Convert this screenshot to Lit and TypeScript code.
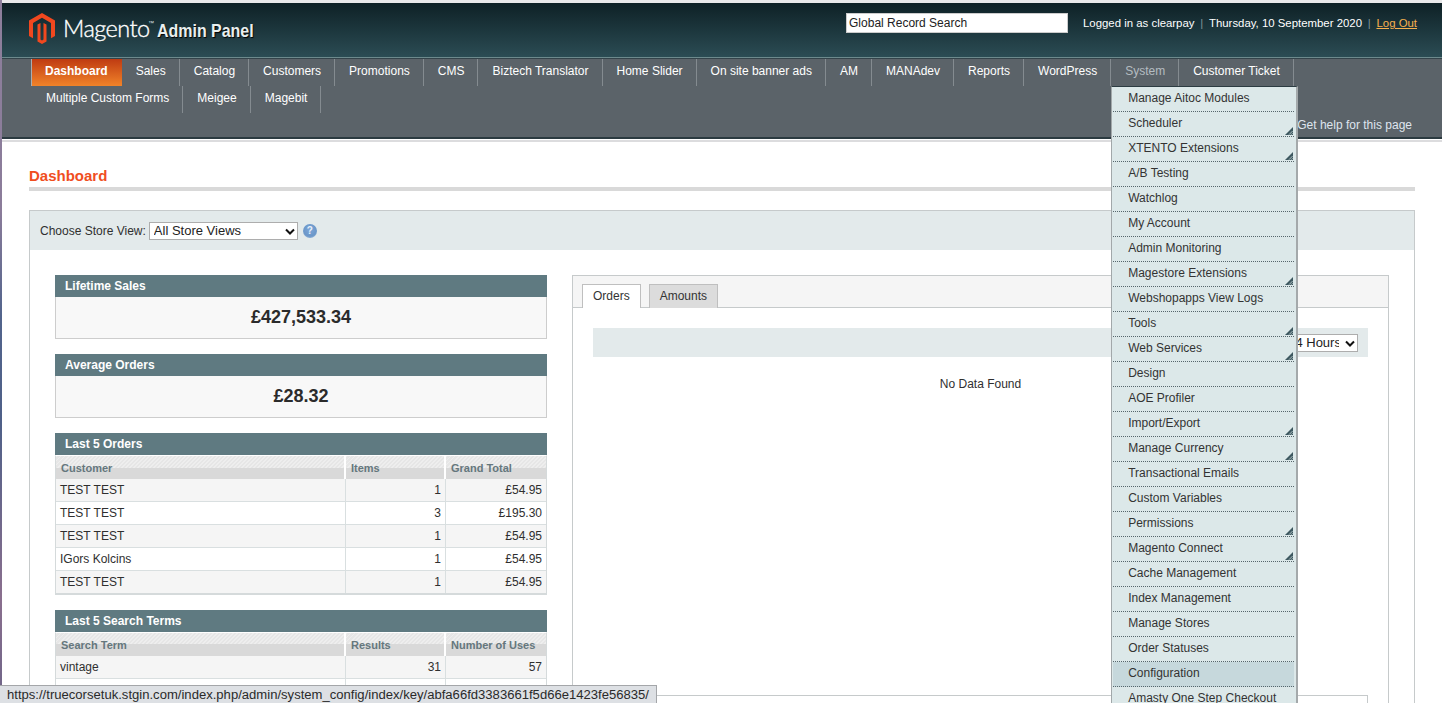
import { LitElement, html, css, nothing } from "lit";
import { customElement } from "lit/decorators.js";

const NAV = ["Dashboard","Sales","Catalog","Customers","Promotions","CMS","Biztech Translator","Home Slider","On site banner ads","AM","MANAdev","Reports","WordPress","System","Customer Ticket","Multiple Custom Forms","Meigee","Magebit"];
const MENU: [string, boolean][] = [
  ["Manage Aitoc Modules",false],["Scheduler",true],["XTENTO Extensions",true],["A/B Testing",false],["Watchlog",false],["My Account",false],["Admin Monitoring",false],["Magestore Extensions",true],["Webshopapps View Logs",false],["Tools",true],["Web Services",true],["Design",false],["AOE Profiler",false],["Import/Export",true],["Manage Currency",true],["Transactional Emails",false],["Custom Variables",false],["Permissions",true],["Magento Connect",true],["Cache Management",false],["Index Management",false],["Manage Stores",false],["Order Statuses",false],["Configuration",false],["Amasty One Step Checkout",false]
];
const ORDERS = [["TEST TEST","1","£54.95"],["TEST TEST","3","£195.30"],["TEST TEST","1","£54.95"],["IGors Kolcins","1","£54.95"],["TEST TEST","1","£54.95"]];
const TERMS = [["vintage","31","57"],["Sharp","5","12"]];

@customElement("app-root")
export class AppRoot extends LitElement {
  static styles = css`
    :host { display:flex; position:relative; width:1442px; height:703px; overflow:hidden; background:#fff; font:12px "Liberation Sans",Arial,sans-serif; color:#2f2f2f; }
    * { box-sizing:border-box; }
    .strip { width:2px; flex:none; background:linear-gradient(#8d7f9c 0,#8b7c9a 30%,#52648c 45%,#4f6088 60%,#8a6f8e 85%,#6d6488 100%); }
    .page { flex:1; min-width:0; display:flex; flex-direction:column; }
    .topline { height:3px; flex:none; background:#e9e9ea; }
    .header { height:55px; flex:none; display:flex; justify-content:space-between; background:linear-gradient(#0e2126,#2b4c54); border-bottom:1px solid #6c8a8d; padding:0 25px 0 27px; }
    .logo { display:flex; align-items:flex-start; padding-top:10px; color:#fff; }
    .logo svg { width:26px; height:31px; flex:none; }
    .mag { font:300 23.5px/31px Lato,"Liberation Sans",sans-serif; margin-left:8px; letter-spacing:-.55px; width:85px; -webkit-text-stroke:.35px #fff; white-space:nowrap; }
    .tm { font-size:6px; line-height:16px; color:#dfe5e6; width:9px; padding-top:2px; }
    .ap { font:700 19px/31px "Liberation Sans",sans-serif; transform:scaleX(.84); transform-origin:left; text-shadow:1px 1px 1px #000; padding-top:2px; white-space:nowrap; width:97px; color:#e9efef; }
    .hright { display:flex; align-items:flex-start; padding-top:10px; color:#fff; }
    .search { width:222px; height:20px; background:#fff; border:1px solid #ccc; padding:0 2px; color:#222; font:12px "Liberation Sans",sans-serif; line-height:18px; margin-right:15px; }
    .hinfo { line-height:20px; display:flex; font-size:11.4px; }
    .pipe { color:#7f9398; margin:0 5.75px; }
    .logout { color:#f6b14e; text-decoration:underline; }
    .nav { height:81px; flex:none; background:#5b6369; border-top:1px solid #33434a; border-bottom:2px solid #2b3a40; display:flex; flex-direction:column; }
    .menu { list-style:none; margin:0; padding:0 118px 0 30px; display:flex; flex-wrap:wrap; }
    .menu > li { position:relative; height:27px; line-height:24px; padding:0 13px 0 14px; color:#fff; border-right:1px solid #848b90; white-space:nowrap; }
    .menu > li.active { font-weight:700; background:linear-gradient(#bf3b12,#f18329); border-right:0; padding:0 14px 0 13px; box-shadow:-1px 0 0 #a9adb0; }
    .menu > li.sys { color:#b4bcc1; }
    .drop { position:absolute; left:0; top:100%; width:187px; margin:0; padding:0 2px 0 1px; list-style:none; background:#dce8e9; border-top:1px solid #2c3c42; border-left:1px solid #a2a8aa; border-right:2px solid #a4a9ab; z-index:5; line-height:23px; }
    .drop li { position:relative; height:25px; line-height:23px; padding-left:15px; color:#333; border-bottom:1px dotted #56666c; }
    .drop li.hov { background:#c6d8dc; }
    .drop svg { position:absolute; right:1px; bottom:1px; width:8px; height:8px; }
    .help { margin-top:auto; padding:0 30px 4px 0; text-align:right; color:#dfe5ee; line-height:16px; }
    .under { height:3px; flex:none; background:linear-gradient(#fff 0 1px,#dcdcde 1px); }
    .content { flex:1; min-height:0; padding:0 27px; }
    .title { margin:0; padding-top:25px; height:49px; font:700 15px/18px "Liberation Sans",sans-serif; color:#f04e1e; border-bottom:4px solid #d9d9d9; }
    .panel { margin-top:19px; border:1px solid #c6cacb; border-bottom:0; height:600px; }
    .switcher { height:39px; background:#e3eaeb; display:flex; align-items:center; padding:0 10px; gap:3px; }
    .sel { position:relative; display:inline-flex; }
    select { appearance:none; background:#fff; border:1px solid #adadad; font:13px "Liberation Sans",sans-serif; color:#222; padding:0 18px 0 4px; height:18px; border-radius:0; line-height:16px; margin:0; }
    .sel svg { position:absolute; right:3px; top:6px; width:10px; height:7px; pointer-events:none; }
    .hint { width:14px; height:14px; border-radius:50%; margin-left:2px; background:radial-gradient(circle at 50% 40%,#7ea7d8,#6b97c9 60%,#b5cde6); color:#e8f0fa; font:700 10px/14px "Liberation Sans",sans-serif; text-align:center; }
    .cols { display:flex; gap:25px; padding:25px; }
    .left { width:492px; flex:none; display:flex; flex-direction:column; gap:15px; }
    .right { width:817px; flex:none; border:1px solid #c6cacb; height:640px; }
    .bhead { height:22px; background:#5f7a81; color:#fff; font-weight:700; line-height:22px; padding-left:10px; }
    .bval { height:42px; background:#f8f8f8; border:1px solid #cdcdcd; border-top:0; text-align:center; font:700 18px/40px "Liberation Sans",sans-serif; color:#2b2b2b; }
    table { width:492px; table-layout:fixed; border-collapse:separate; border-spacing:0; border-left:1px solid #d5dadb; border-right:1px solid #d5dadb; border-bottom:2px solid #d5dadb; border-top:1px solid #fff; }
    th { height:23px; padding:1px 0 0 5px; text-align:left; font:700 11px/22px "Liberation Sans",sans-serif; color:#65777d; background:linear-gradient(#0000 0 50%,#d9d9d9 50%),repeating-linear-gradient(135deg,#eeeeee 0 1.41px,#e6e6e6 1.41px 2.83px); border-right:2px solid #fff; }
    td { height:23px; padding:0 4px; line-height:22px; vertical-align:top; border-bottom:1px solid #d9dfe0; border-right:1px solid #d9dfe0; background:#f5f5f5; }
    tr.even td { background:#fff; }
    tr:last-child td { border-bottom:0; height:22px; }
    td:last-child, th:last-child { border-right:0; }
    td.n { text-align:right; padding-right:4px; }
    .tabs { height:32px; background:#f5f5f5; border-bottom:1px solid #c6cacb; padding:8px 0 0 9px; display:flex; gap:8px; }
    .tab { height:24px; padding:0 10px; line-height:22px; background:#dcdcdc; border:1px solid #bfbfbf; border-bottom:0; color:#333; }
    .tab.on { background:#fff; height:24px; margin-bottom:-1px; }
    .tbody { padding:20px; }
    .range { height:29px; background:#e3eaeb; display:flex; justify-content:flex-end; align-items:center; padding-right:10px; }
    .nodata { height:338px; padding-top:20px; text-align:center; line-height:14px; }
    .chartbox { border:1px solid #c6cacb; height:200px; background:#fff; }
    .status { position:absolute; left:0; bottom:0; height:18px; width:657px; background:#dde0e4; border-top:1px solid #a4a6a9; border-right:1px solid #a4a6a9; padding-left:7px; font:13.08px/17px "Liberation Sans",sans-serif; color:#2a2a2a; white-space:nowrap; z-index:6; }
  `;

  private chevron() {
    return html`<svg viewBox="0 0 10 7"><path d="M1 1.5 5 5.5 9 1.5" fill="none" stroke="#111" stroke-width="2"/></svg>`;
  }

  private grid(heads: string[], rows: string[][]) {
    return html`<table>
      <colgroup><col style="width:290px"/><col style="width:100px"/><col/></colgroup>
      <thead><tr>${heads.map((h) => html`<th>${h}</th>`)}</tr></thead>
      <tbody>${rows.map((r, i) => html`<tr class=${i % 2 ? "even" : ""}><td>${r[0]}</td><td class="n">${r[1]}</td><td class="n">${r[2]}</td></tr>`)}</tbody>
    </table>`;
  }

  render() {
    return html`
      <div class="strip"></div>
      <div class="page">
        <div class="topline"></div>
        <header class="header">
          <div class="logo">
            <svg viewBox="0 0 26 31"><path fill="#f1481f" d="M13 0 26 7.6V23l-4 2.3V9.9L13 4.7 4 9.9v15.4L0 23V7.6Z"/><path fill="#f1481f" d="M13 31 8.5 28.4V11.6l3-1.7v16.6l1.5.9 1.5-.9V9.9l3 1.7v16.8Z"/></svg>
            <span class="mag">Magento</span><span class="tm">™</span><span class="ap">Admin Panel</span>
          </div>
          <div class="hright">
            <div class="search">Global Record Search</div>
            <div class="hinfo"><span>Logged in as clearpay</span><span class="pipe">|</span><span>Thursday, 10 September 2020</span><span class="pipe">|</span><span class="logout">Log Out</span></div>
          </div>
        </header>
        <nav class="nav">
          <ul class="menu">
            ${NAV.map((n) => html`<li class=${n === "Dashboard" ? "active" : n === "System" ? "sys" : ""}>${n}
              ${n === "System" ? html`<ul class="drop">${MENU.map(([m, a]) => html`<li class=${m === "Configuration" ? "hov" : ""}>${m}${a ? html`<svg viewBox="0 0 9 9"><path d="M9 0V9H0Z" fill="#3d5860"/><path d="M4.5 8.6 8.6 4.5M7 8.6 8.6 7" stroke="#dce8e9" stroke-width=".8"/></svg>` : nothing}</li>`)}</ul>` : nothing}</li>`)}
          </ul>
          <div class="help">Get help for this page</div>
        </nav>
        <div class="under"></div>
        <main class="content">
          <h3 class="title">Dashboard</h3>
          <section class="panel">
            <div class="switcher">
              <span>Choose Store View:</span>
              <span class="sel"><select style="width:149px"><option>All Store Views</option></select>${this.chevron()}</span>
              <span class="hint">?</span>
            </div>
            <div class="cols">
              <div class="left">
                <div><div class="bhead">Lifetime Sales</div><div class="bval">£427,533.34</div></div>
                <div><div class="bhead">Average Orders</div><div class="bval">£28.32</div></div>
                <div><div class="bhead">Last 5 Orders</div>${this.grid(["Customer","Items","Grand Total"], ORDERS)}</div>
                <div><div class="bhead">Last 5 Search Terms</div>${this.grid(["Search Term","Results","Number of Uses"], TERMS)}</div>
              </div>
              <div class="right">
                <div class="tabs"><div class="tab on">Orders</div><div class="tab">Amounts</div></div>
                <div class="tbody">
                  <div class="range"><span class="sel"><select style="width:103px"><option>Last 24 Hours</option></select>${this.chevron()}</span></div>
                  <div class="nodata">No Data Found</div>
                  <div class="chartbox"></div>
                </div>
              </div>
            </div>
          </section>
        </main>
      </div>
      <div class="status">https://truecorsetuk.stgin.com/index.php/admin/system_config/index/key/abfa66fd3383661f5d66e1423fe56835/</div>
    `;
  }
}
